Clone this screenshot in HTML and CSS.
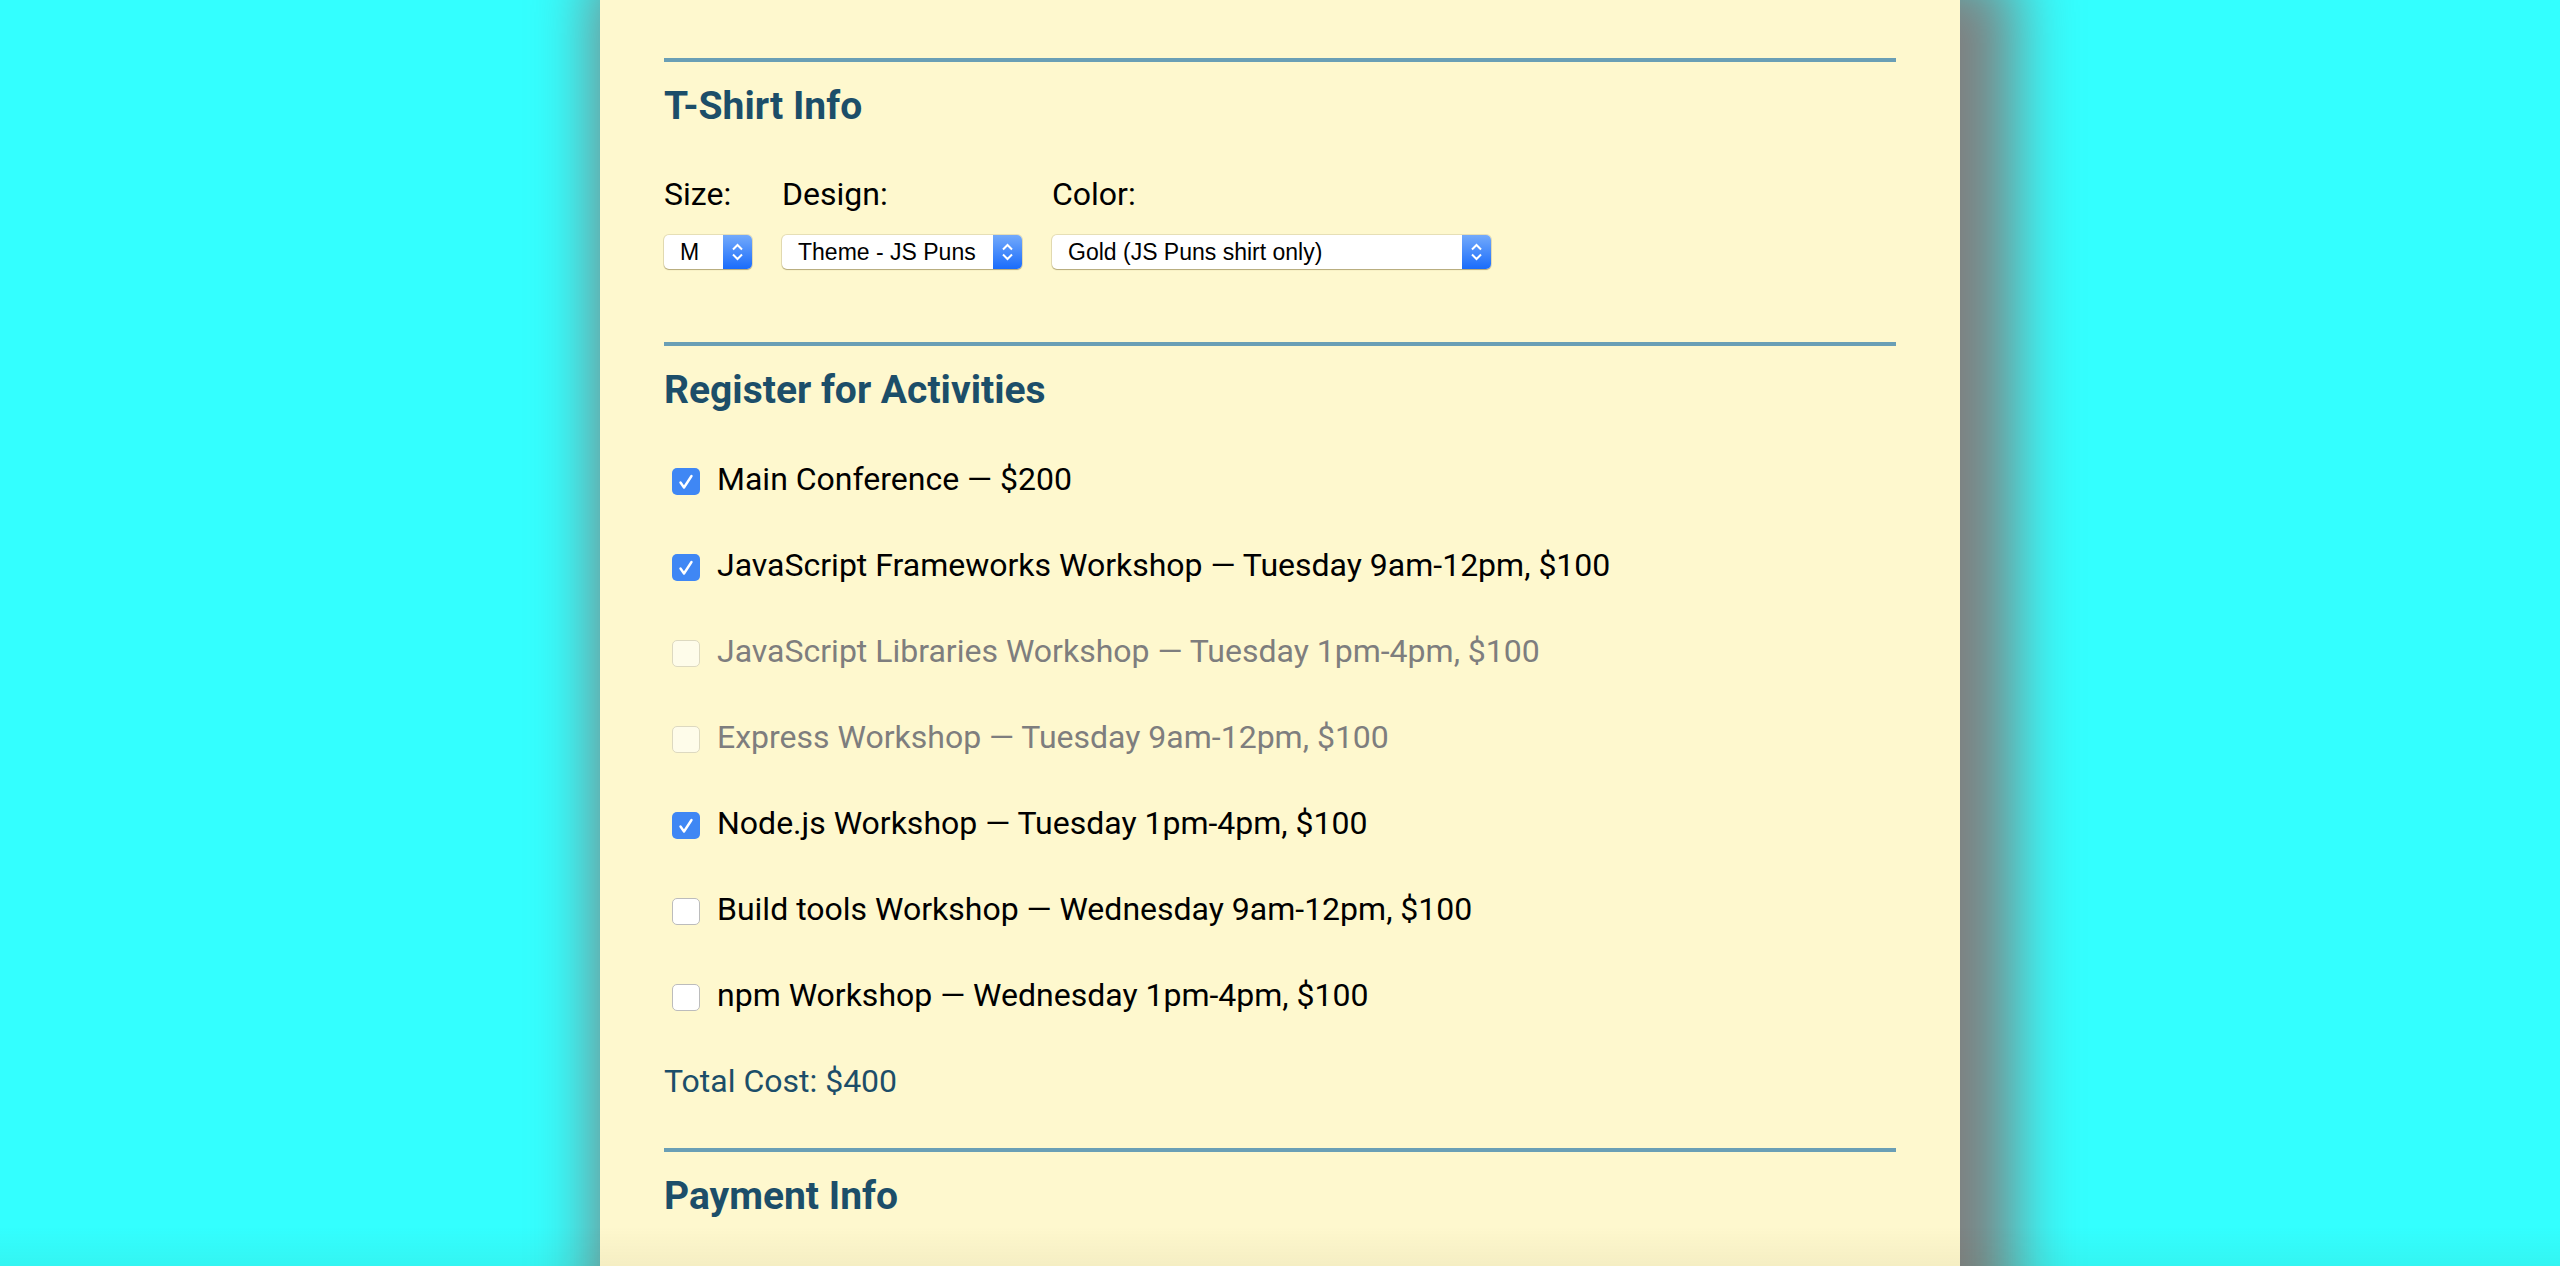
FILE: index.html
```html
<!DOCTYPE html>
<html lang="en">
<head>
<meta charset="utf-8">
<title>Conference Registration</title>
<link rel="stylesheet" href="styles.css">
</head>
<body>
<main class="panel">
  <section class="section">
    <h2 class="section-title">T-Shirt Info</h2>
    <div class="shirt-row">
      <div class="field">
        <span class="field-label">Size:</span>
        <div class="select select-size">
          <span class="select-text">M</span>
          <span class="select-arrow"><svg width="29" height="34" viewBox="0 0 29 34"><polyline points="10,14.5 14.5,10 19,14.5" fill="none" stroke="#fff" stroke-width="2"/><polyline points="10,19.5 14.5,24 19,19.5" fill="none" stroke="#fff" stroke-width="2"/></svg></span>
        </div>
      </div>
      <div class="field">
        <span class="field-label">Design:</span>
        <div class="select select-design">
          <span class="select-text">Theme - JS Puns</span>
          <span class="select-arrow"><svg width="29" height="34" viewBox="0 0 29 34"><polyline points="10,14.5 14.5,10 19,14.5" fill="none" stroke="#fff" stroke-width="2"/><polyline points="10,19.5 14.5,24 19,19.5" fill="none" stroke="#fff" stroke-width="2"/></svg></span>
        </div>
      </div>
      <div class="field">
        <span class="field-label">Color:</span>
        <div class="select select-color">
          <span class="select-text">Gold (JS Puns shirt only)</span>
          <span class="select-arrow"><svg width="29" height="34" viewBox="0 0 29 34"><polyline points="10,14.5 14.5,10 19,14.5" fill="none" stroke="#fff" stroke-width="2"/><polyline points="10,19.5 14.5,24 19,19.5" fill="none" stroke="#fff" stroke-width="2"/></svg></span>
        </div>
      </div>
    </div>
  </section>

  <section class="section section-activities">
    <h2 class="section-title">Register for Activities</h2>
    <div class="activities">
      <label class="activity">
        <span class="box checked"><svg width="28" height="27" viewBox="0 0 28 27"><polyline points="8.5,14.5 12,19.5 19.5,8" fill="none" stroke="#fff" stroke-width="2.4" stroke-linecap="round" stroke-linejoin="round"/></svg></span>
        <span class="activity-text">Main Conference — $200</span>
      </label>
      <label class="activity">
        <span class="box checked"><svg width="28" height="27" viewBox="0 0 28 27"><polyline points="8.5,14.5 12,19.5 19.5,8" fill="none" stroke="#fff" stroke-width="2.4" stroke-linecap="round" stroke-linejoin="round"/></svg></span>
        <span class="activity-text">JavaScript Frameworks Workshop — Tuesday 9am-12pm, $100</span>
      </label>
      <label class="activity disabled">
        <span class="box"></span>
        <span class="activity-text">JavaScript Libraries Workshop — Tuesday 1pm-4pm, $100</span>
      </label>
      <label class="activity disabled">
        <span class="box"></span>
        <span class="activity-text">Express Workshop — Tuesday 9am-12pm, $100</span>
      </label>
      <label class="activity">
        <span class="box checked"><svg width="28" height="27" viewBox="0 0 28 27"><polyline points="8.5,14.5 12,19.5 19.5,8" fill="none" stroke="#fff" stroke-width="2.4" stroke-linecap="round" stroke-linejoin="round"/></svg></span>
        <span class="activity-text">Node.js Workshop — Tuesday 1pm-4pm, $100</span>
      </label>
      <label class="activity">
        <span class="box"></span>
        <span class="activity-text">Build tools Workshop — Wednesday 9am-12pm, $100</span>
      </label>
      <label class="activity">
        <span class="box"></span>
        <span class="activity-text">npm Workshop — Wednesday 1pm-4pm, $100</span>
      </label>
      <p class="total">Total Cost: $400</p>
    </div>
  </section>

  <section class="section section-payment">
    <h2 class="section-title">Payment Info</h2>
  </section>
</main>
<div class="bottom-fade"></div>
</body>
</html>
```

FILE: styles.css
```css
html, body {
  margin: 0;
  padding: 0;
}

body {
  background: #33ffff;
  font-family: Roboto, "Noto Sans", sans-serif;
  color: #000;
  height: 1266px;
  overflow: hidden;
}

.panel {
  width: 1232px;
  margin: 0 auto;
  padding: 58px 64px 400px;
  background: #fef8ce;
  box-shadow: 25px 0 60px 30px #808080;
}

.section {
  border-top: 4px solid #6a9fb5;
  padding-bottom: 73px;
}

.section-activities {
  padding-bottom: 47px;
}

.section-title {
  margin: 20px 0 0;
  font-size: 39px;
  line-height: 48px;
  font-weight: 700;
  color: #1c4e69;
}

.shirt-row {
  display: flex;
  gap: 30px;
  margin-top: 44px;
}

.field {
  display: flex;
  flex-direction: column;
  gap: 21px;
}

.field-label {
  font-size: 32px;
  line-height: 40px;
}

.select {
  display: flex;
  height: 34px;
  background: #fff;
  border-radius: 5px;
  box-shadow: 0 0 0 1px rgba(120, 110, 80, 0.18), 0 1px 1px rgba(120, 100, 40, 0.45);
  font-family: "Liberation Sans", Arial, sans-serif;
  font-size: 23px;
  line-height: 34px;
  color: #000;
}

.select-size { width: 88px; }
.select-design { width: 240px; }
.select-color { width: 439px; }

.select-text {
  flex: 1;
  padding-left: 16px;
  white-space: nowrap;
  overflow: hidden;
}

.select-arrow {
  width: 29px;
  height: 34px;
  border-radius: 0 5px 5px 0;
  background: linear-gradient(#73aafb, #1a6cfb);
}

.select-arrow svg {
  display: block;
}

.activities {
  display: flex;
  flex-direction: column;
  gap: 46px;
  margin-top: 45px;
}

.activity {
  display: flex;
  align-items: flex-start;
  gap: 17px;
  font-size: 32px;
  line-height: 40px;
}

.box {
  width: 28px;
  height: 27px;
  margin: 9px 0 0 8px;
  box-sizing: border-box;
  border-radius: 5px;
  background: #fff;
  border: 1px solid #bcbcbc;
  flex: none;
}

.box svg {
  display: block;
}

.box.checked {
  background: #3f87f4;
  border: none;
}

.activity.disabled {
  color: #7e7e7e;
}

.activity.disabled .box {
  background: #fefcea;
  border-color: #ddd9c0;
}

.total {
  margin: 0;
  font-size: 32px;
  line-height: 40px;
  color: #1c4e69;
}

.bottom-fade {
  position: fixed;
  left: 0;
  right: 0;
  bottom: 0;
  height: 40px;
  background: linear-gradient(rgba(0, 0, 0, 0), rgba(80, 60, 0, 0.05));
  pointer-events: none;
}
```
